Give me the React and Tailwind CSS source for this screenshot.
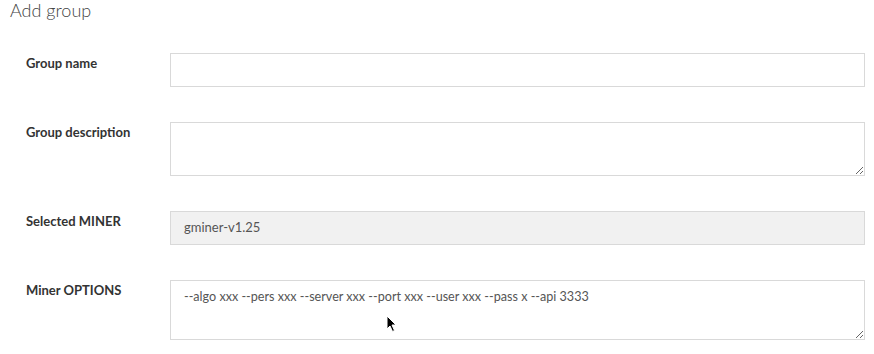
import React from "react";

export default function App() {
  const font = { fontFamily: "Lato, 'Open Sans', sans-serif" };
  return (
    <div className="relative w-[874px] h-[354px] bg-white overflow-hidden" style={font}>
      <div className="pl-[10px] text-[18px] leading-[21px] font-light text-[#444]">Add group</div>
      <div className="flex flex-col gap-[35px] mt-[32px] pr-[9px]">
        <div className="flex">
          <div className="w-[170px] pl-[26px] pt-[1px] text-[13px] font-bold text-[#333]">Group name</div>
          <input className="flex-1 h-[34px] border border-[#d9d9d9] outline-none px-[13px] text-[13px]" />
        </div>
        <div className="flex">
          <div className="w-[170px] pl-[26px] pt-[1px] text-[13px] font-bold text-[#333]">Group description</div>
          <textarea className="flex-1 h-[54px] border border-[#d9d9d9] outline-none px-[13px] py-[6px] text-[13px] resize-y" />
        </div>
        <div className="flex">
          <div className="w-[170px] pl-[26px] pt-[1px] text-[13px] font-bold text-[#333]">Selected MINER</div>
          <div className="flex-1 h-[34px] border border-[#d9d9d9] bg-[#f1f1f1] px-[13px] flex items-center text-[13px] text-[#555]">gminer-v1.25</div>
        </div>
        <div className="flex">
          <div className="w-[170px] pl-[26px] pt-[1px] text-[13px] font-bold text-[#333]">Miner OPTIONS</div>
          <textarea
            className="flex-1 h-[60px] border border-[#d9d9d9] outline-none px-[13px] py-[7px] text-[12.6px] text-[#555] resize-y"
            style={font}
            defaultValue="--algo xxx --pers xxx --server xxx --port xxx --user xxx --pass x --api 3333"
          />
        </div>
      </div>
      <svg className="absolute left-[386px] top-[315px]" width="12" height="18" viewBox="0 0 12 18">
        <path d="M1 1 L1 14 L4 11 L6.5 16.5 L8.5 15.5 L6 10 L10 10 Z" fill="#000" stroke="#fff" strokeWidth="1" />
      </svg>
    </div>
  );
}
